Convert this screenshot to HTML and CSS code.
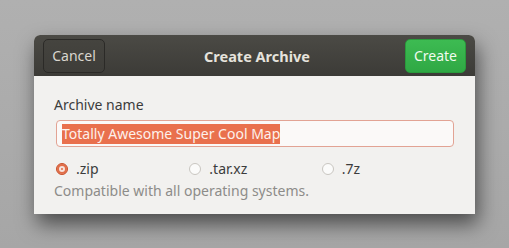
FILE: index.html
```html
<!DOCTYPE html>
<html lang="en">
<head>
  <meta charset="UTF-8" />
  <title>Create Archive</title>
  <link rel="stylesheet" href="styles.css">
</head>
<body>
  <div class="dialog">
    <div class="header">
      <button class="btn btn-cancel">Cancel</button>
      <div class="title">Create Archive</div>
      <button class="btn btn-create">Create</button>
    </div>

    <div class="content">
      <div class="label">Archive name</div>
      <div class="name-input">
        <span class="selected">Totally Awesome Super Cool Map</span>
      </div>

      <div class="radio-row">
        <label class="radio checked"><span class="dot"></span>.zip</label>
        <label class="radio"><span class="dot"></span>.tar.xz</label>
        <label class="radio"><span class="dot"></span>.7z</label>
      </div>
      <div class="hint">Compatible with all operating systems.</div>
    </div>
  </div>
</body>
</html>
```

FILE: styles.css
```css
* {
  box-sizing: border-box;
}

body {
  margin: 0;
  height: 248px;
  padding: 35px 0 0 34px;
  background: linear-gradient(#b0b0b0, #a6a6a6);
  font-family: 'Noto Sans', 'DejaVu Sans', sans-serif;
  font-size: 14px;
  overflow: hidden;
}

.dialog {
  width: 441px;
  height: 179px;
  background: #f2f1ef;
  border-radius: 6px 6px 0 0;
  box-shadow: 3px 10px 20px rgba(0, 0, 0, 0.55);
}

.header {
  height: 41px;
  display: flex;
  align-items: center;
  justify-content: space-between;
  padding: 0 9px;
  background: linear-gradient(#4b4a45, #3c3b37);
  border-radius: 6px 6px 0 0;
}

.title {
  color: #e6e3dc;
  font-weight: bold;
  font-size: 14.5px;
  margin-left: 4px;
}

.btn {
  height: 34px;
  border-radius: 5px;
  font-family: inherit;
  font-size: 14px;
  padding: 0;
}

.btn-cancel {
  width: 62px;
  color: #dad7cf;
  background: linear-gradient(#45443f, #3e3d39);
  border: 1px solid #2b2a27;
}

.btn-create {
  width: 61px;
  color: #f1fbef;
  background: linear-gradient(#3dbb52, #2fa844);
  border: 1px solid #2a9a3c;
}

.content {
  padding: 19px 20px 0 20px;
  color: #3c3c3c;
}

.label {
  margin-bottom: 6px;
}

.name-input {
  height: 27px;
  margin-left: 2px;
  width: 398px;
  padding: 0 5px;
  display: flex;
  align-items: center;
  background: #fbf9f8;
  border: 1px solid #e2a394;
  border-radius: 4px;
}

.selected {
  background: #e9704d;
  color: #fdf1ec;
  line-height: 20px;
}

.radio-row {
  display: flex;
  margin-top: 12px;
  padding-left: 2px;
}

.radio {
  display: flex;
  align-items: center;
  gap: 8px;
  width: 136px;
}

.radio:nth-child(2) {
  width: 135px;
}

.dot {
  width: 12px;
  height: 12px;
  border-radius: 50%;
  background: #fbfbfa;
  border: 1px solid #c9c6c1;
}

.radio.checked .dot {
  background: #e26d47;
  border-color: #c9522d;
  box-shadow: inset 0 0 0 2px #e26d47, inset 0 0 0 4px #f7e3dc;
}

.hint {
  margin-top: 3px;
  color: #8d8c89;
}
```
